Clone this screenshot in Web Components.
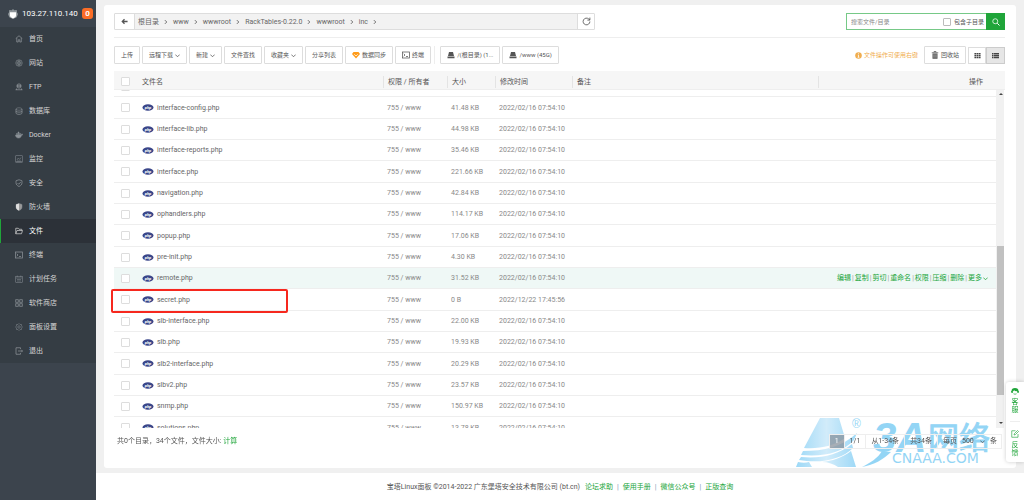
<!DOCTYPE html>
<html lang="zh-CN">
<head>
<meta charset="utf-8">
<meta name="viewport" content="width=device-width, initial-scale=1">
<title>宝塔Linux面板</title>
<style>
  body { margin: 0; background: #f0f0f0; color: #555; font: 7px/12px Roboto, "Noto Sans CJK SC", sans-serif; --green: #20a53a; --line: #ddd; --small: 6px; }
</style>
</head>
<body>
<bt-layout>
  <bt-sidebar slot="side"></bt-sidebar>
  <bt-files></bt-files>
  <bt-footer slot="foot"></bt-footer>
</bt-layout>
<bt-support></bt-support>

<script>
const ICONS = {
  home: '<path d="M1.5 7 8 1.5 14.5 7M3.5 6v8h3V9.500h3V14h3V6" stroke-width="1.500"/>',
  globe: '<circle cx="8" cy="8" r="6.500"/><circle cx="8" cy="8" r="3"/><path d="M1.500 8h13M8 1.500v13M3 4h10M3 12h10"/>',
  ftp: '<circle cx="8" cy="6" r="4.500"/><path d="M3.500 6h9M8 1.500v9M5 3v6M11 3v6M1 13.500h14M3 11v3M13 11v3" stroke-width="1.500"/>',
  db: '<ellipse cx="8" cy="4" rx="6" ry="2.500"/><path d="M2 4v8c0 3.500 12 3.500 12 0V4M2 8c0 3 12 3 12 0" stroke-width="1.500"/>',
  docker: '<path d="M1 8h11c1 0 1-2 2-2.500.5 1 .8 1.500 1.500 2-1 1-2 1-2.500 1-1 4-3 5.500-6 5.500S1.500 12.500 1 8zM3 5h2v2H3zM6 5h2v2H6zM6 2h2v2H6zM9 5h2v2H9z" fill="currentColor"/>',
  monitor: '<rect x="1.500" y="1.500" width="13" height="12"/><path d="M4 10l2.500-4 3 3 2.500-4M4 12h8M1 15h14"/>',
  shield: '<path d="M8 1.500l6 2v4c0 3.500-2.500 6-6 7.500-3.500-1.500-6-4-6-7.500v-4z" stroke-width="1.500"/><path d="M5 8l2.500 2.500L11.500 6" stroke-width="1.500"/>',
  wall: '<path d="M8 1l6 2v5c0 3.500-2.500 5.500-6 7-3.500-1.500-6-3.500-6-7V3z" fill="#999"/><path d="M8 1v14c-3.500-1.500-6-3.500-6-7V3z" fill="#ddd" stroke="none"/>',
  folder: '<path d="M1.500 13.500v-11h5l1.500 2h5.500v2.500M1.500 13.500l2.500-6.500h11l-2 6.500z" stroke-width="1.500"/>',
  term: '<rect x="1" y="2" width="14" height="12" stroke-width="1.500"/><path d="M3.500 5.500L6 8l-2.500 2.500M8 11h4" stroke-width="1.500"/>',
  cal: '<rect x="1.500" y="2.500" width="13" height="12"/><path d="M1.500 6h13M4.500 1v3M11.500 1v3M4 9h8M4 12h8"/>',
  apps: '<g stroke-width="1.500"><rect x="1.500" y="1.500" width="5" height="5"/><rect x="9.500" y="1.500" width="5" height="5"/><rect x="1.500" y="9.500" width="5" height="5"/><rect x="9.500" y="9.500" width="5" height="5"/></g>',
  gear: '<path d="M8 1l2 2h3v3l2 2-2 2v3h-3l-2 2-2-2H3v-3L1 8l2-2V3h3z"/><circle cx="8" cy="8" r="2.500"/>',
  exit: '<path d="M11 4V1.500H2v13h9V12M6 8h9M12.500 5.500L15 8l-2.500 2.500" stroke-width="1.500"/>',
  chev: '<path d="M1 5l7 7 7-7" stroke-width="2.500"/>',
  next: '<path d="M5 3l5 5-5 5" stroke-width="2.500"/>',
  back: '<path d="M15 8H4M8 3L3 8l5 5" stroke-width="3"/>',
  reload: '<path d="M14 8a6 6 0 1 1-2-4.500L14 5M14 1v4.500h-4.500" stroke-width="1.500"/>',
  search: '<circle cx="6.500" cy="6.500" r="5" stroke-width="1.500"/><path d="M10.500 10.500L15 15" stroke-width="2"/>',
  gem: '<path d="M3 2h10l3 4-8 9-8-9z" fill="#ff9b1a" stroke="none"/><path d="M4.500 6.500L8 10l3.500-3.500" stroke="#fff" stroke-width="1.500"/>',
  disk: '<path d="M4 2h8l2 8H2zM1 11h14v3.500H1z" fill="currentColor" stroke="none"/>',
  info: '<circle cx="8" cy="8" r="7.500" fill="currentColor" stroke="none"/><path d="M8 3v2M6.500 7H8v5M6 12h4" stroke="#fff" stroke-width="1.800"/>',
  trash: '<path d="M1.500 3.500h13M6 3V1h4v2" stroke-width="1.500"/><path d="M3 5h10v10.500H3z" fill="currentColor" stroke="none"/><path d="M6 6.500v7M10 6.500v7" stroke="#fff"/>',
  grid: '<path d="M1 2h4v3H1zM6 2h4v3H6zM11 2h4v3h-4zM1 6.500h4v3H1zM6 6.500h4v3H6zM11 6.500h4v3h-4zM1 11h4v3H1zM6 11h4v3H6zM11 11h4v3h-4z" fill="currentColor" stroke="none"/>',
  list: '<path d="M0 2h3v3H0zM4 2h12v3H4zM0 6.500h3v3H0zM4 6.500h12v3H4zM0 11h3v3H0zM4 11h12v3H4z" fill="currentColor" stroke="none"/>',
  head: '<path d="M1 8a7 6 0 0 1 14 0l1 1v2l-3 1-1-4C9 9 7 8 6 6 6 8 4.500 8.500 3.500 9L4 12 0 11V9z" fill="currentColor" stroke="none"/><path d="M5 13.500c2 1 4 1 6 0" stroke-width="1.500"/>',
  edit: '<path d="M14 8v6.500H1.500v-13H9M6 10l1-3 6-6 2 2-6 6z" stroke-width="1.300"/>',
  logo: '<path d="M8 0l2 2 4-.5.500 4L16 8l-2 5-6 3-6-3L0 8l1.500-2.500L2 1.500 6 2z" fill="#8d9499" stroke="none"/><path d="M3 5h10v5c0 2.500-2 4-5 5-3-1-5-2.500-5-5z" fill="#fff" stroke="none"/>'
};
const icon = (name, size = 8) =>
  `<svg class="ico" width="${size}" height="${size}" viewBox="0 0 16 16" fill="none" stroke="currentColor" aria-hidden="true">${ICONS[name]}</svg>`;

const BASE = `<style>
  *, ::before, ::after { box-sizing: border-box; }
  button, input, select { font: inherit; color: inherit; margin: 0; }
  a { color: inherit; text-decoration: none; }
  .ico { display: block; flex: none; }
</style>`;

function define(tag, render) {
  customElements.define(tag, class extends HTMLElement {
    constructor() {
      super();
      const t = document.createElement('template');
      t.innerHTML = BASE + render(this);
      this.attachShadow({ mode: 'open' }).append(t.content.cloneNode(true));
    }
  });
}

define('bt-layout', () => `<style>
  :host { display: grid; grid-template-columns: 96px 1fr; min-height: 100vh; }
  .main { display: flex; flex-direction: column; min-width: 0; }
  main { padding: 5px 8px; }
</style>
<slot name="side"></slot>
<div class="main"><main><slot></slot></main><slot name="foot"></slot></div>`);

const MENU = [['home','首页'],['globe','网站'],['ftp','FTP'],['db','数据库'],['docker','Docker'],['monitor','监控'],['shield','安全'],['wall','防火墙'],['folder','文件'],['term','终端'],['cal','计划任务'],['apps','软件商店'],['gear','面板设置'],['exit','退出']];
define('bt-sidebar', () => `<style>
  :host { display: block; background: #3c444d; color: #d5d5d5; }
  header { display: flex; align-items: center; height: 27px; padding: 0 3px 0 8px; gap: 4px; color: #fff; font-size: 8px; }
  .badge { margin-left: auto; width: 11px; line-height: 11px; text-align: center; background: #fc6d26; border-radius: 3px; font-weight: bold; }
  ul { margin: 0; padding: 0; list-style: none; background: #353d44; }
  a { display: flex; align-items: center; gap: 6px; height: 24px; padding-left: 14px; border-left: 1px solid transparent; }
  .ico { color: #8b9197; }
  a.on { background: #2c3138; border-color: var(--green); color: #fff; }
  a.on .ico { color: #ccc; }
</style>
<header>${icon('logo', 10)}<span>103.27.110.140</span><span class="badge">0</span></header>
<nav><ul>${MENU.map(([i, t]) => `<li><a href="#"${t === '文件' ? ' class="on"' : ''}>${icon(i)}<span>${t}</span></a></li>`).join('')}</ul></nav>`);

define('bt-path', () => `<style>
  :host { display: flex; flex: 0 1 54%; height: 17px; border: 1px solid var(--line); border-radius: 1px; background: #f2f2f2; }
  button { display: grid; place-items: center; border: 0; padding: 0; background: #fff; }
  .back { width: 20px; border-right: 1px solid var(--line); }
  .reload { width: 17px; border-left: 1px solid var(--line); }
  nav { flex: 1; display: flex; align-items: center; padding-left: 3px; color: #666; }
  nav a { display: flex; align-items: center; gap: 4px; margin-right: 4px; }
</style>
<button class="back" aria-label="返回">${icon('back', 7)}</button>
<nav>${['根目录','www','wwwroot','RackTables-0.22.0','wwwroot','inc'].map(t => `<a href="#"><span>${t}</span>${icon('next', 6)}</a>`).join('')}</nav>
<button class="reload" aria-label="刷新">${icon('reload', 9)}</button>`);

define('bt-search', () => `<style>
  :host { display: flex; flex: 0 0 159px; height: 17px; border: 1px solid #76c987; font-size: var(--small); }
  input[type=text] { flex: 1; min-width: 0; border: 0; padding: 0 4px; outline: 0; background: #fff; }
  ::placeholder { color: #888; }
  label { display: flex; align-items: center; gap: 3px; margin-right: 3px; }
  input[type=checkbox] { appearance: none; width: 8px; height: 8px; border: 1px solid #bbb; border-radius: 1px; }
  button { display: grid; place-items: center; width: 19px; margin: -1px; border: 0; padding: 0; background: var(--green); color: #fff; }
</style>
<input type="text" placeholder="搜索文件/目录" aria-label="搜索文件/目录">
<label><input type="checkbox">包含子目录</label>
<button aria-label="搜索">${icon('search')}</button>`);

define('bt-button', el => `<style>
  :host { display: block; flex: none; font-size: var(--small); }
  button { display: flex; align-items: center; gap: 2px; height: 18px; padding: 0 6px; border: 1px solid var(--line); border-radius: 1px; background: #fff; white-space: nowrap; }
</style>
<button>${el.getAttribute('icon') ? icon(el.getAttribute('icon')) : ''}<span><slot></slot></span>${el.hasAttribute('drop') ? icon('chev', 5) : ''}</button>`);

define('bt-view-switch', () => `<style>
  :host { display: flex; flex: none; color: #444; }
  button { display: grid; place-items: center; width: 18px; height: 17px; padding: 0; border: 1px solid var(--line); background: #fff; }
  button + button { width: 19px; border-color: #ccc; background: #e6e6e6; }
</style>
<button aria-label="图标">${icon('grid', 7)}</button><button aria-label="列表">${icon('list', 7)}</button>`);

const FILES = [
  ['interface-cacti.php'],['interface-config.php','41.48 KB'],['interface-lib.php','44.98 KB'],['interface-reports.php','35.46 KB'],
  ['interface.php','221.66 KB'],['navigation.php','42.84 KB'],['ophandlers.php','114.17 KB'],['popup.php','17.06 KB'],
  ['pre-init.php','4.30 KB'],['remote.php','31.52 KB'],['secret.php','0 B','2022/12/22 17:45:56'],['slb-interface.php','22.00 KB'],
  ['slb.php','19.93 KB'],['slb2-interface.php','20.29 KB'],['slbv2.php','23.57 KB'],['snmp.php','150.97 KB'],['solutions.php','13.78 KB']];
const OPS = ['编辑','复制','剪切','重命名','权限','压缩','删除','更多'];
const PHP = `<svg width="12" height="7" viewBox="0 0 12 7" aria-hidden="true"><ellipse cx="6" cy="3.500" rx="5.500" ry="3.200" fill="#3a4689"/><text x="6" y="5" text-anchor="middle" font-size="4" font-weight="bold" font-style="italic" fill="#fff">php</text></svg>`;
const COLS = '<colgroup><col style="width:24px"><col><col style="width:64px"><col style="width:48px"><col style="width:77px"><col style="width:28%"><col style="width:177px"></colgroup>';
const detail = (n, s, d) => s ? `<td>755 / www</td><td>${s}</td><td>${d}</td>` : '<td></td><td></td><td></td>';

define('bt-file-table', () => `<style>
  :host { display: block; }
  table { width: 100%; table-layout: fixed; border-collapse: separate; border-spacing: 0; }
  th, td { padding: 0 0 0 4px; text-align: left; font-weight: normal; white-space: nowrap; }
  .head { height: 19px; padding-right: 9px; background: #f6f6f6; border-bottom: 1px solid #eee; }
  th { height: 18px; }
  th span { display: block; }
  th .sep { margin-left: -4px; padding-left: 4px; border-left: 1px solid #e4e4e4; }
  th:last-child { text-align: right; padding-right: 13px; }
  th:last-child .sep { margin: 0; border: 0; }
  th:nth-child(6) .sep { border-right: 1px solid #e4e4e4; }
  .check { padding-left: 7px; }
  input { appearance: none; display: block; width: 9px; height: 9px; border: 1px solid #ddd; border-radius: 1px; background: #fff; }
  .view { position: relative; display: flex; height: 338px; }
  .clip { flex: 1; min-width: 0; overflow: hidden; }
  .clip table { margin-top: -14px; color: #888; }
  tr { height: 21px; }
  .clip tr:nth-child(3n+2) { height: 22px; }
  td { border-bottom: 1px solid #eee; }
  .name { display: flex; align-items: center; gap: 3px; color: #666; }
  tr.hover td { background: #eff8f6; }
  .ops { display: flex; align-items: center; justify-content: flex-end; gap: 1px; padding-right: 8px; color: var(--green); }
  .ops i { font-style: normal; color: #999; }
  .ops a { display: flex; align-items: center; gap: 1px; }
  .bar { flex: none; width: 9px; padding: 0 1px; display: flex; flex-direction: column; align-items: center; background: linear-gradient(#f1f1f1, #f1f1f1) no-repeat 0 0 / 8px 100%; }
  .thumb { width: 7px; height: 149px; margin: 151px 0 auto; background: #c1c1c1; }
  .bar b { width: 0; border: 2px solid transparent; }
  .up { border-bottom-color: #444 !important; margin-top: 1px; }
  .down { border-top-color: #444 !important; margin-bottom: 2px; }
</style>
<div class="head"><table>${COLS}<thead><tr><th class="check"><input type="checkbox" aria-label="全选"></th><th>文件名</th>${['权限 / 所有者','大小','修改时间','备注','操作'].map(t => `<th><span class="sep">${t}</span></th>`).join('')}</tr></thead></table></div>
<div class="view"><div class="clip"><table>${COLS}<tbody>${FILES.map(([n, s, d = '2022/02/16 07:54:10']) => `<tr${n === 'remote.php' ? ' class="hover"' : ''}><td class="check"><input type="checkbox" aria-label="${n}"></td><td><a class="name" href="#">${PHP}<span>${n}</span></a></td>${detail(n, s, d)}<td></td><td>${n === 'remote.php' ? `<div class="ops">${OPS.map(o => `<a href="#">${o}${o === '更多' ? icon('chev', 5) : ''}</a>`).join('<i>|</i>')}</div>` : ''}</td></tr>`).join('')}</tbody></table></div>
<div class="bar"><b class="up"></b><div class="thumb"></div><b class="down"></b></div></div>`);

define('bt-pager', () => `<style>
  :host { display: flex; height: 15px; border: 1px solid #eee; color: #555; }
  span, label { display: flex; align-items: center; padding: 0 5px; border-right: 1px solid #eee; white-space: nowrap; }
  .cur { width: 15px; justify-content: center; padding: 0; background: rgba(130,140,150,.7); color: #fff; }
  label { border: 0; gap: 5px; padding: 0 4px 0 5px; }
  .pick { position: relative; padding: 0; border: 0; }
  select { appearance: none; width: 23px; height: 13px; padding: 0; border: 0; background: none; }
  .pick .ico { position: absolute; right: 0; pointer-events: none; }
</style>
<span class="cur">1</span><span>1/1</span><span>从1-34条</span><span>共34条</span>
<label>每页<span class="pick"><select><option>500</option></select>${icon('chev', 5)}</span>条</label>`);

define('bt-watermark', () => `<style>
  :host { display: block; width: 200px; height: 52px; pointer-events: none; }
  svg { display: block; }
</style>
<svg width="200" height="52" viewBox="0 0 200 52" aria-hidden="true">
  <defs><linearGradient id="g" x1="0" y1="0" x2="1" y2="0"><stop offset="0" stop-color="#5dc0f2"/><stop offset=".5" stop-color="#b5e0f8"/><stop offset="1" stop-color="#5dc0f2"/></linearGradient></defs>
  <g opacity=".6">
    <path d="M24 2H43L49 22C38 30 24 33 8 32zM7 35C28 35 46 31 61 17L58 24C46 37 28 41 5 39zM5 41C24 43 42 39 56 28l1 4C46 43 26 48 3 44zM26 46C36 45 46 42 55 35L60 51H42C38 48 32 46 26 46zM2 46c4 1 8 1 11 0L16 51H0z" fill="url(#g)"/>
    <path d="M95 36C88 43 78 49 66 51C74 47 82 42 86 35z" fill="#4dbaf0"/>
    <g fill="#4dbaf0" font-weight="bold">
      <text x="56" y="12" font-size="12" font-family="Liberation Sans, sans-serif" font-weight="normal">®</text>
      <text x="77" y="36" font-size="42" font-style="italic" font-family="Liberation Sans, sans-serif">3A</text>
      <text x="132" y="33" font-size="31" font-weight="normal" stroke="#4dbaf0" font-family="Noto Sans CJK SC, sans-serif">网络</text>
      <text x="96" y="47" font-size="14" font-weight="normal" font-family="DejaVu Sans, sans-serif">CNAAA.COM</text>
    </g>
  </g>
</svg>`);

define('bt-files', () => `<style>
  :host { display: block; position: relative; padding: 8px 11px 14px 10px; background: #fff; border-radius: 3px; }
  .top { display: flex; justify-content: space-between; padding-bottom: 7px; border-bottom: 1px solid #eee; }
  .tools { display: flex; align-items: center; gap: 2px; padding: 8px 0 7px; }
  .rule { width: 1px; height: 18px; margin: 0 3px 0 1px; background: #eee; }
  .tip { display: flex; align-items: center; gap: 2px; margin: 0 4px 0 auto; font-size: var(--small); color: #f0ad4e; }
  .foot { position: relative; z-index: 1; display: flex; align-items: center; justify-content: space-between; height: 26px; padding: 0 3px; }
  .foot a { color: var(--green); }
  .mark { position: absolute; left: 7px; top: 284px; width: 177px; height: 24px; border: 2px solid #f6281e; border-radius: 2px; pointer-events: none; }
  bt-watermark { position: absolute; right: 20px; bottom: 0; }
</style>
<div class="top"><bt-path></bt-path><bt-search></bt-search></div>
<div class="tools">
  <bt-button>上传</bt-button><bt-button drop>远程下载</bt-button><bt-button drop>新建</bt-button><bt-button>文件查找</bt-button><bt-button drop>收藏夹</bt-button><bt-button>分享列表</bt-button><bt-button icon="gem">数据同步</bt-button><bt-button icon="term">终端</bt-button>
  <div class="rule"></div>
  <bt-button icon="disk">/(根目录) (1...</bt-button><bt-button icon="disk">/www (45G)</bt-button>
  <div class="tip">${icon('info', 7)}<span>文件操作可使用右键</span></div>
  <bt-button icon="trash">回收站</bt-button><bt-view-switch></bt-view-switch>
</div>
<bt-file-table></bt-file-table>
<div class="foot"><div>共0个目录，34个文件，文件大小: <a href="#">计算</a></div><bt-pager></bt-pager></div>
<div class="mark"></div>
<bt-watermark></bt-watermark>`);

define('bt-footer', () => `<style>
  :host { display: flex; flex: 1; align-items: center; justify-content: center; gap: 5px; min-height: 27px; background: #fff; }
  nav { display: flex; color: var(--green); }
  a + a::before { content: "|"; margin: 0 4px; color: #7a8fb0; }
</style>
<span>宝塔Linux面板 ©2014-2022 广东堡塔安全技术有限公司 (bt.cn)</span>
<nav>${['论坛求助','使用手册','微信公众号','正版查询'].map(t => `<a href="#">${t}</a>`).join('')}</nav>`);

define('bt-support', () => `<style>
  :host { position: fixed; right: 0; bottom: 38px; width: 18px; padding: 5px 0; background: #fff; border-radius: 3px 0 0 3px; box-shadow: 0 0 4px rgba(0,0,0,.2); color: var(--green); }
  a { display: flex; flex-direction: column; align-items: center; gap: 3px; line-height: 8px; padding-bottom: 7px; }
  a + a { margin: 0 4px; padding: 8px 0 0; border-top: 1px solid #eee; }
  a span { width: 7px; }
</style>
<a href="#">${icon('head')}<span>客服</span></a><a href="#">${icon('edit')}<span>反馈</span></a>`);
</script>
</body>
</html>
